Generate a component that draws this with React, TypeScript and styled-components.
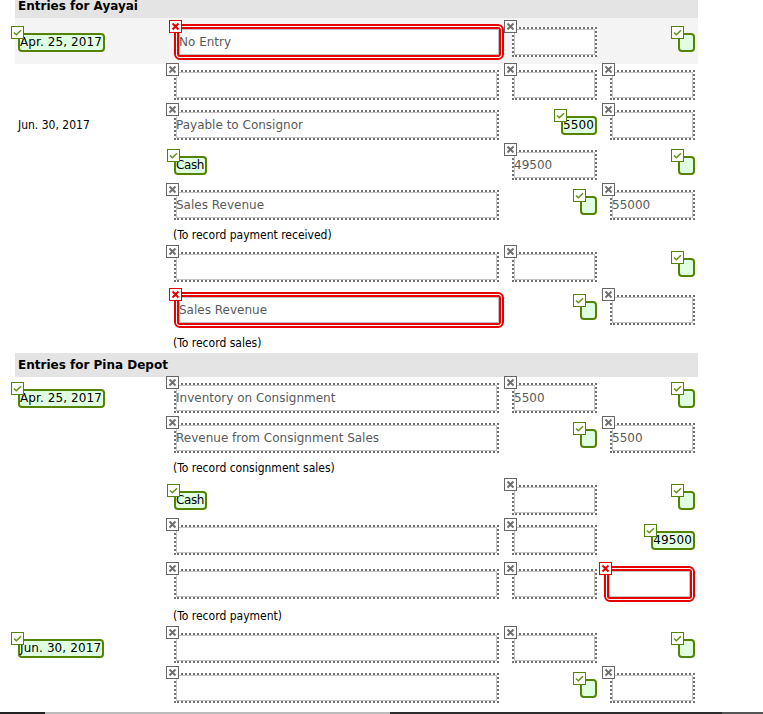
import React from "react";
import styled, { createGlobalStyle } from "styled-components";

const GlobalStyle = createGlobalStyle`
	html, body {
		margin: 0;
		padding: 0;
		background: #fff;
		overflow: hidden;
	}
	body {
		font-family: "DejaVu Sans", Verdana, sans-serif;
		font-size: 12px;
		color: #000;
	}
`;

const Page = styled.div`
	display: flex;
	flex-direction: column;
	width: 763px;
	height: 714px;
	overflow: hidden;
`;

const Sheet = styled.div`
	display: flex;
	flex: 1;
	flex-direction: column;
	min-height: 0;
	width: 683px;
	margin: -6px 0 0 15px;
`;

const SectionHeader = styled.div<{ $gap?: number }>`
	flex: none;
	height: 24px;
	line-height: 25px;
	padding-left: 3px;
	margin-top: ${(p) => p.$gap ?? 0}px;
	background: #e4e4e4;
	font-size: 12px;
	font-weight: bold;
`;

const Row = styled.div<{ $height?: number; $gap?: number; $shaded?: boolean }>`
	display: grid;
	flex: none;
	box-sizing: border-box;
	grid-template-columns: 159px 338px 85px 98px;
	align-items: center;
	height: ${(p) => p.$height ?? 40}px;
	padding-top: ${(p) => (p.$shaded ? 2 : 0)}px;
	margin-top: ${(p) => p.$gap ?? 0}px;
	background: ${(p) => (p.$shaded ? "#f4f4f4" : "transparent")};
`;

const DateCell = styled.div`
	display: flex;
	padding-left: 3px;
`;

const PlainDate = styled.span`
	font-stretch: condensed;
`;

const AccountCell = styled.div`
	display: flex;
	justify-content: flex-start;
`;

const AmountCell = styled.div`
	display: flex;
	justify-content: flex-end;
`;

const Note = styled.div<{ $gap?: number }>`
	flex: none;
	height: 18px;
	line-height: 20px;
	padding-left: 158px;
	margin-top: ${(p) => p.$gap ?? 0}px;
	font-stretch: condensed;
`;

const Dotted = styled.div<{ $width: number }>`
	position: relative;
	box-sizing: border-box;
	width: ${(p) => p.$width}px;
	height: 30px;
	border: 2px dotted #707070;
	background: #fff;
`;

const DottedInner = styled.div`
	box-sizing: border-box;
	height: 100%;
	border: 1px solid #c4c4c4;
	text-indent: -1px;
	line-height: 25px;
	color: #5a5a5a;
	white-space: nowrap;
`;

const Wrong = styled.div<{ $width: number }>`
	position: relative;
	box-sizing: border-box;
	width: ${(p) => p.$width}px;
	height: 36px;
	margin: -3px 0;
	padding: 1px;
	border: 2px solid #e60000;
	border-radius: 6px;
	background: #fff;
`;

const WrongInner = styled.div`
	box-sizing: border-box;
	height: 100%;
	border: 2px solid #e60000;
	border-radius: 3px;
	box-shadow: inset 0 0 0 1px #c4c4c4;
	line-height: 27px;
	color: #5a5a5a;
`;

const Correct = styled.div<{ $tight?: boolean }>`
	position: relative;
	box-sizing: border-box;
	min-width: 17px;
	height: 19px;
	padding-right: 1px;
	border: 2px solid #528400;
	border-radius: 4px;
	background: #e0ffe0;
	line-height: 15px;
	letter-spacing: ${(p) => (p.$tight ? -0.4 : 0.1)}px;
	color: #000;
	white-space: nowrap;
`;

const Badge = styled.span<{ $tone: "ok" | "off" | "bad" }>`
	position: absolute;
	display: flex;
	align-items: center;
	justify-content: center;
	box-sizing: border-box;
	top: ${(p) => (p.$tone === "bad" ? -6 : -9)}px;
	left: ${(p) => (p.$tone === "ok" ? -9 : p.$tone === "off" ? -10 : -7)}px;
	width: 13px;
	height: 13px;
	border: 1px solid
		${(p) =>
			p.$tone === "ok" ? "#528400" : p.$tone === "bad" ? "#e60000" : "#666"};
	background: #fff;
`;

const BottomEdge = styled.div`
	display: flex;
	flex: none;
	height: 2px;
`;

const EdgeSegment = styled.div<{ $width: number; $color: string }>`
	width: ${(p) => p.$width}px;
	background: ${(p) => p.$color};
`;

const Cross = ({ color }: { color: string }) => (
	<svg width="9" height="9" viewBox="0 0 9 9">
		<path d="M1.5 1.5 7.5 7.5M7.5 1.5 1.5 7.5" stroke={color} strokeWidth="2" fill="none" />
	</svg>
);

const Tick = () => (
	<svg width="9" height="9" viewBox="0 0 9 9">
		<path d="M1 4.5 3.3 6.7 8 2.2" stroke="#5f9410" strokeWidth="1.5" fill="none" />
	</svg>
);

const Blank = ({ width, text }: { width: number; text?: string }) => (
	<Dotted $width={width}>
		<Badge $tone="off">
			<Cross color="#707070" />
		</Badge>
		<DottedInner>{text}</DottedInner>
	</Dotted>
);

const Bad = ({ width, text }: { width: number; text?: string }) => (
	<Wrong $width={width}>
		<Badge $tone="bad">
			<Cross color="#e60000" />
		</Badge>
		<WrongInner>{text}</WrongInner>
	</Wrong>
);

const Good = ({ text, tight }: { text?: string; tight?: boolean }) => (
	<Correct $tight={tight}>
		<Badge $tone="ok">
			<Tick />
		</Badge>
		{text}
	</Correct>
);

const ACCOUNT = 325;
const AMOUNT = 85;

export default function App() {
	return (
		<Page>
			<GlobalStyle />
			<Sheet>
				<SectionHeader>Entries for Ayayai</SectionHeader>
				<Row $height={46} $shaded>
					<DateCell>
						<Good text="Apr. 25, 2017" />
					</DateCell>
					<AccountCell>
						<Bad width={330} text="No Entry" />
					</AccountCell>
					<AmountCell>
						<Blank width={AMOUNT} />
					</AmountCell>
					<AmountCell>
						<Good />
					</AmountCell>
				</Row>
				<Row $gap={1}>
					<div />
					<AccountCell>
						<Blank width={ACCOUNT} />
					</AccountCell>
					<AmountCell>
						<Blank width={AMOUNT} />
					</AmountCell>
					<AmountCell>
						<Blank width={AMOUNT} />
					</AmountCell>
				</Row>
				<Row>
					<DateCell>
						<PlainDate>Jun. 30, 2017</PlainDate>
					</DateCell>
					<AccountCell>
						<Blank width={ACCOUNT} text="Payable to Consignor" />
					</AccountCell>
					<AmountCell>
						<Good text="5500" />
					</AmountCell>
					<AmountCell>
						<Blank width={AMOUNT} />
					</AmountCell>
				</Row>
				<Row>
					<div />
					<AccountCell>
						<Good text="Cash" tight />
					</AccountCell>
					<AmountCell>
						<Blank width={AMOUNT} text="49500" />
					</AmountCell>
					<AmountCell>
						<Good />
					</AmountCell>
				</Row>
				<Row>
					<div />
					<AccountCell>
						<Blank width={ACCOUNT} text="Sales Revenue" />
					</AccountCell>
					<AmountCell>
						<Good />
					</AmountCell>
					<AmountCell>
						<Blank width={AMOUNT} text="55000" />
					</AmountCell>
				</Row>
				<Note>(To record payment received)</Note>
				<Row $gap={4}>
					<div />
					<AccountCell>
						<Blank width={ACCOUNT} />
					</AccountCell>
					<AmountCell>
						<Blank width={AMOUNT} />
					</AmountCell>
					<AmountCell>
						<Good />
					</AmountCell>
				</Row>
				<Row $gap={3}>
					<div />
					<AccountCell>
						<Bad width={330} text="Sales Revenue" />
					</AccountCell>
					<AmountCell>
						<Good />
					</AmountCell>
					<AmountCell>
						<Blank width={AMOUNT} />
					</AmountCell>
				</Row>
				<Note $gap={3}>(To record sales)</Note>
				<SectionHeader $gap={2}>Entries for Pina Depot</SectionHeader>
				<Row $gap={1}>
					<DateCell>
						<Good text="Apr. 25, 2017" />
					</DateCell>
					<AccountCell>
						<Blank width={ACCOUNT} text="Inventory on Consignment" />
					</AccountCell>
					<AmountCell>
						<Blank width={AMOUNT} text="5500" />
					</AmountCell>
					<AmountCell>
						<Good />
					</AmountCell>
				</Row>
				<Row>
					<div />
					<AccountCell>
						<Blank width={ACCOUNT} text="Revenue from Consignment Sales" />
					</AccountCell>
					<AmountCell>
						<Good />
					</AmountCell>
					<AmountCell>
						<Blank width={AMOUNT} text="5500" />
					</AmountCell>
				</Row>
				<Note>(To record consignment sales)</Note>
				<Row $gap={4}>
					<div />
					<AccountCell>
						<Good text="Cash" tight />
					</AccountCell>
					<AmountCell>
						<Blank width={AMOUNT} />
					</AmountCell>
					<AmountCell>
						<Good />
					</AmountCell>
				</Row>
				<Row>
					<div />
					<AccountCell>
						<Blank width={ACCOUNT} />
					</AccountCell>
					<AmountCell>
						<Blank width={AMOUNT} />
					</AmountCell>
					<AmountCell>
						<Good text="49500" />
					</AmountCell>
				</Row>
				<Row $gap={4}>
					<div />
					<AccountCell>
						<Blank width={ACCOUNT} />
					</AccountCell>
					<AmountCell>
						<Blank width={AMOUNT} />
					</AmountCell>
					<AmountCell>
						<Bad width={91} />
					</AmountCell>
				</Row>
				<Note $gap={2}>(To record payment)</Note>
				<Row $gap={4}>
					<DateCell>
						<Good text="Jun. 30, 2017" />
					</DateCell>
					<AccountCell>
						<Blank width={ACCOUNT} />
					</AccountCell>
					<AmountCell>
						<Blank width={AMOUNT} />
					</AmountCell>
					<AmountCell>
						<Good />
					</AmountCell>
				</Row>
				<Row>
					<div />
					<AccountCell>
						<Blank width={ACCOUNT} />
					</AccountCell>
					<AmountCell>
						<Good />
					</AmountCell>
					<AmountCell>
						<Blank width={AMOUNT} />
					</AmountCell>
				</Row>
			</Sheet>
			<BottomEdge>
				<EdgeSegment $width={45} $color="#222" />
				<EdgeSegment $width={345} $color="#bbb" />
				<EdgeSegment $width={332} $color="#2d2d2d" />
				<EdgeSegment $width={41} $color="#555" />
			</BottomEdge>
		</Page>
	);
}
